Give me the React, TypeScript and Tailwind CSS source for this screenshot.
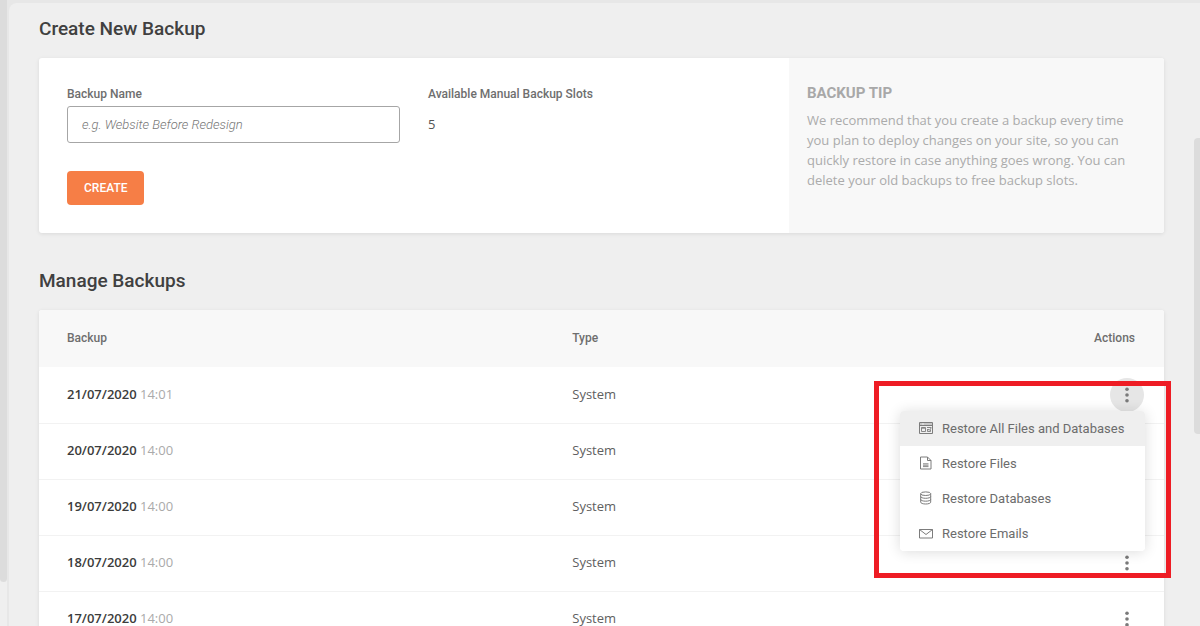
import type { ReactNode } from "react";

const backups = [
  { date: "21/07/2020", time: "14:01", type: "System", open: true },
  { date: "20/07/2020", time: "14:00", type: "System", open: false },
  { date: "19/07/2020", time: "14:00", type: "System", open: false },
  { date: "18/07/2020", time: "14:00", type: "System", open: false },
  { date: "17/07/2020", time: "14:00", type: "System", open: false },
];

function Icon({ children }: { children: ReactNode }) {
  return (
    <svg
      className="h-4 w-4 shrink-0"
      viewBox="0 0 16 16"
      fill="none"
      stroke="#7c7c7c"
      strokeWidth="1"
      aria-hidden="true"
    >
      {children}
    </svg>
  );
}

function WindowIcon() {
  return (
    <Icon>
      <path d="M1.5 2.5h13v11h-13zM1.5 5.5h13" />
      <path d="M2 4h2.5M5.5 4H14" strokeWidth="0.7" />
      <path d="M3.5 7.5h4v4h-4zM3.5 8.2h4M9 7.5h4.5M9.5 9v2.5h3V9.5M10 9l1.2 1.3L13.2 8" strokeWidth="0.9" />
    </Icon>
  );
}

function FileIcon() {
  return (
    <Icon>
      <path d="M2.5 2h7l3.5 3.5v8.5H2.5zM9.5 2v3.5H13" />
      <path d="M5 8.8h5.5M5 10.2h5.5M5 11.6h5.5" strokeWidth="0.9" />
    </Icon>
  );
}

function DatabaseIcon() {
  return (
    <Icon>
      <ellipse cx="7.7" cy="3.7" rx="5" ry="1.8" />
      <path d="M2.7 3.7v8.5c0 1 2.2 1.8 5 1.8s5-.8 5-1.8V3.7M2.7 6.5c0 1 2.2 1.8 5 1.8s5-.8 5-1.8M2.7 9.4c0 1 2.2 1.8 5 1.8s5-.8 5-1.8" />
    </Icon>
  );
}

function MailIcon() {
  return (
    <Icon>
      <path d="M1.5 4.5h13v8.5h-13zM1.5 4.5L8 9.5l6.5-5" />
    </Icon>
  );
}

const menuItems = [
  { label: "Restore All Files and Databases", icon: <WindowIcon />, active: true },
  { label: "Restore Files", icon: <FileIcon />, active: false },
  { label: "Restore Databases", icon: <DatabaseIcon />, active: false },
  { label: "Restore Emails", icon: <MailIcon />, active: false },
];

function ActionsButton({ open, label }: { open: boolean; label: string }) {
  return (
    <button
      type="button"
      aria-label={label}
      aria-expanded={open}
      className={`flex h-[34px] w-[34px] items-center justify-center rounded-full ${open ? "bg-[#e6e6e6]" : ""}`}
    >
      <svg className="h-4 w-4" viewBox="0 0 16 16" fill="#7a7a7a" aria-hidden="true">
        <circle cx="8" cy="2.2" r="1.8" />
        <circle cx="8" cy="8" r="1.8" />
        <circle cx="8" cy="13.8" r="1.8" />
      </svg>
    </button>
  );
}

function RestoreMenu() {
  return (
    <ul
      role="menu"
      className="absolute top-[33px] -right-px z-10 w-[245px] overflow-hidden rounded-sm bg-white shadow-[0_1px_14px_rgba(0,0,0,0.14)]"
    >
      {menuItems.map((item) => (
        <li key={item.label} role="none">
          <button
            type="button"
            role="menuitem"
            className={`flex h-[35px] w-full items-center gap-2 pl-[18px] text-left font-['Roboto',sans-serif] text-[13px] whitespace-nowrap text-[#6c6c6c] ${item.active ? "bg-[#efefef]" : "bg-white"}`}
          >
            {item.icon}
            {item.label}
          </button>
        </li>
      ))}
    </ul>
  );
}

function CreateBackup() {
  return (
    <section>
      <h2 className="font-['Roboto',sans-serif] text-[19px] leading-7 font-medium text-[#404040]">Create New Backup</h2>
      <div className="mt-[15px] grid min-h-[175px] grid-cols-3 rounded-[3px] bg-white shadow-[0_1px_4px_rgba(0,0,0,0.09)]">
        <form
          className="col-span-2 grid grid-cols-2 content-start gap-x-7 px-7 pt-7"
          onSubmit={(e) => e.preventDefault()}
        >
          <div>
            <label
              htmlFor="backup-name"
              className="block font-['Roboto',sans-serif] text-xs leading-4 font-medium text-[#6e6e6e]"
            >
              Backup Name
            </label>
            <input
              id="backup-name"
              type="text"
              placeholder="e.g. Website Before Redesign"
              className="mt-1 h-[37px] w-full rounded-[3px] border border-[#a6a6a6] px-[14px] font-['Roboto',sans-serif] text-[13px] font-light text-[#444] placeholder:text-[#777] placeholder:italic"
            />
            <button
              type="submit"
              className="mt-7 h-[34px] rounded-sm bg-[#f67e46] px-[17px] font-['Roboto',sans-serif] text-xs font-medium text-white"
            >
              CREATE
            </button>
          </div>
          <div>
            <p className="font-['Roboto',sans-serif] text-xs leading-4 font-medium text-[#6e6e6e]">
              Available Manual Backup Slots
            </p>
            <p className="mt-3 text-[13px] leading-5 text-[#555]">5</p>
          </div>
        </form>
        <aside className="rounded-r-[3px] bg-[#f8f8f8] pt-[25px] pr-7 pl-[18px]">
          <h3 className="font-['Roboto',sans-serif] text-[15px] leading-5 font-bold text-[#a8a8a8]">BACKUP TIP</h3>
          <p className="mt-[7px] text-[13px] leading-5 text-[#ababab]">
            We recommend that you create a backup every time you plan to deploy changes on your site, so you can quickly
            restore in case anything goes wrong. You can delete your old backups to free backup slots.
          </p>
        </aside>
      </div>
    </section>
  );
}

function ManageBackups() {
  return (
    <section className="mt-[34px]">
      <h2 className="font-['Roboto',sans-serif] text-[19px] leading-7 font-medium text-[#404040]">Manage Backups</h2>
      <div className="mt-[15px] rounded-[3px] bg-white shadow-[0_1px_4px_rgba(0,0,0,0.09)]">
        <table className="w-full table-fixed">
          <thead>
            <tr className="h-[57px] font-['Roboto',sans-serif] text-xs text-[#6e6e6e]">
              <th scope="col" className="w-[45%] rounded-tl-[3px] bg-[#f8f8f8] pb-0.5 pl-7 text-left font-medium">
                Backup
              </th>
              <th scope="col" className="bg-[#f8f8f8] pb-0.5 pl-[27px] text-left font-medium">
                Type
              </th>
              <th scope="col" className="rounded-tr-[3px] bg-[#f8f8f8] pr-[29px] pb-0.5 text-right font-medium">
                Actions
              </th>
            </tr>
          </thead>
          <tbody>
            {backups.map((row) => (
              <tr key={row.date} className="h-14 border-b border-[#f2f2f2] text-[13px]">
                <td className="pl-7 text-[#aaa]">
                  <span className="font-semibold text-[#3c3c3c]">{row.date}</span> {row.time}
                </td>
                <td className="pl-[27px] text-[#606060]">{row.type}</td>
                <td className="pr-5">
                  <div className="relative ml-auto w-[34px]">
                    <ActionsButton open={row.open} label={`Actions for ${row.date}`} />
                    {row.open && (
                      <>
                        <RestoreMenu />
                        <div className="pointer-events-none absolute top-[3px] -right-[27px] -left-[236px] z-20 h-[197px] border-5 border-[#ee1c24]" />
                      </>
                    )}
                  </div>
                </td>
              </tr>
            ))}
          </tbody>
        </table>
      </div>
    </section>
  );
}

export default function App() {
  return (
    <div className="flex h-screen overflow-hidden bg-[#e7e7e7] font-['Open_Sans',sans-serif]">
      <div className="w-[7px] shrink-0 bg-[#efefef]">
        <div className="h-[93%] rounded-b-sm bg-[#dcdcdc]" />
      </div>
      <div className="mt-[3px] ml-[2px] flex min-w-0 flex-1 rounded-tl-lg bg-[#efefef]">
        <main className="min-w-0 flex-1 pt-3 pr-[30px] pl-[30px]">
          <CreateBackup />
          <ManageBackups />
        </main>
        <div className="w-[6px] shrink-0 pt-[135px]">
          <div className="h-[296px] rounded-l-sm bg-[#dcdcdc]" />
        </div>
      </div>
    </div>
  );
}
